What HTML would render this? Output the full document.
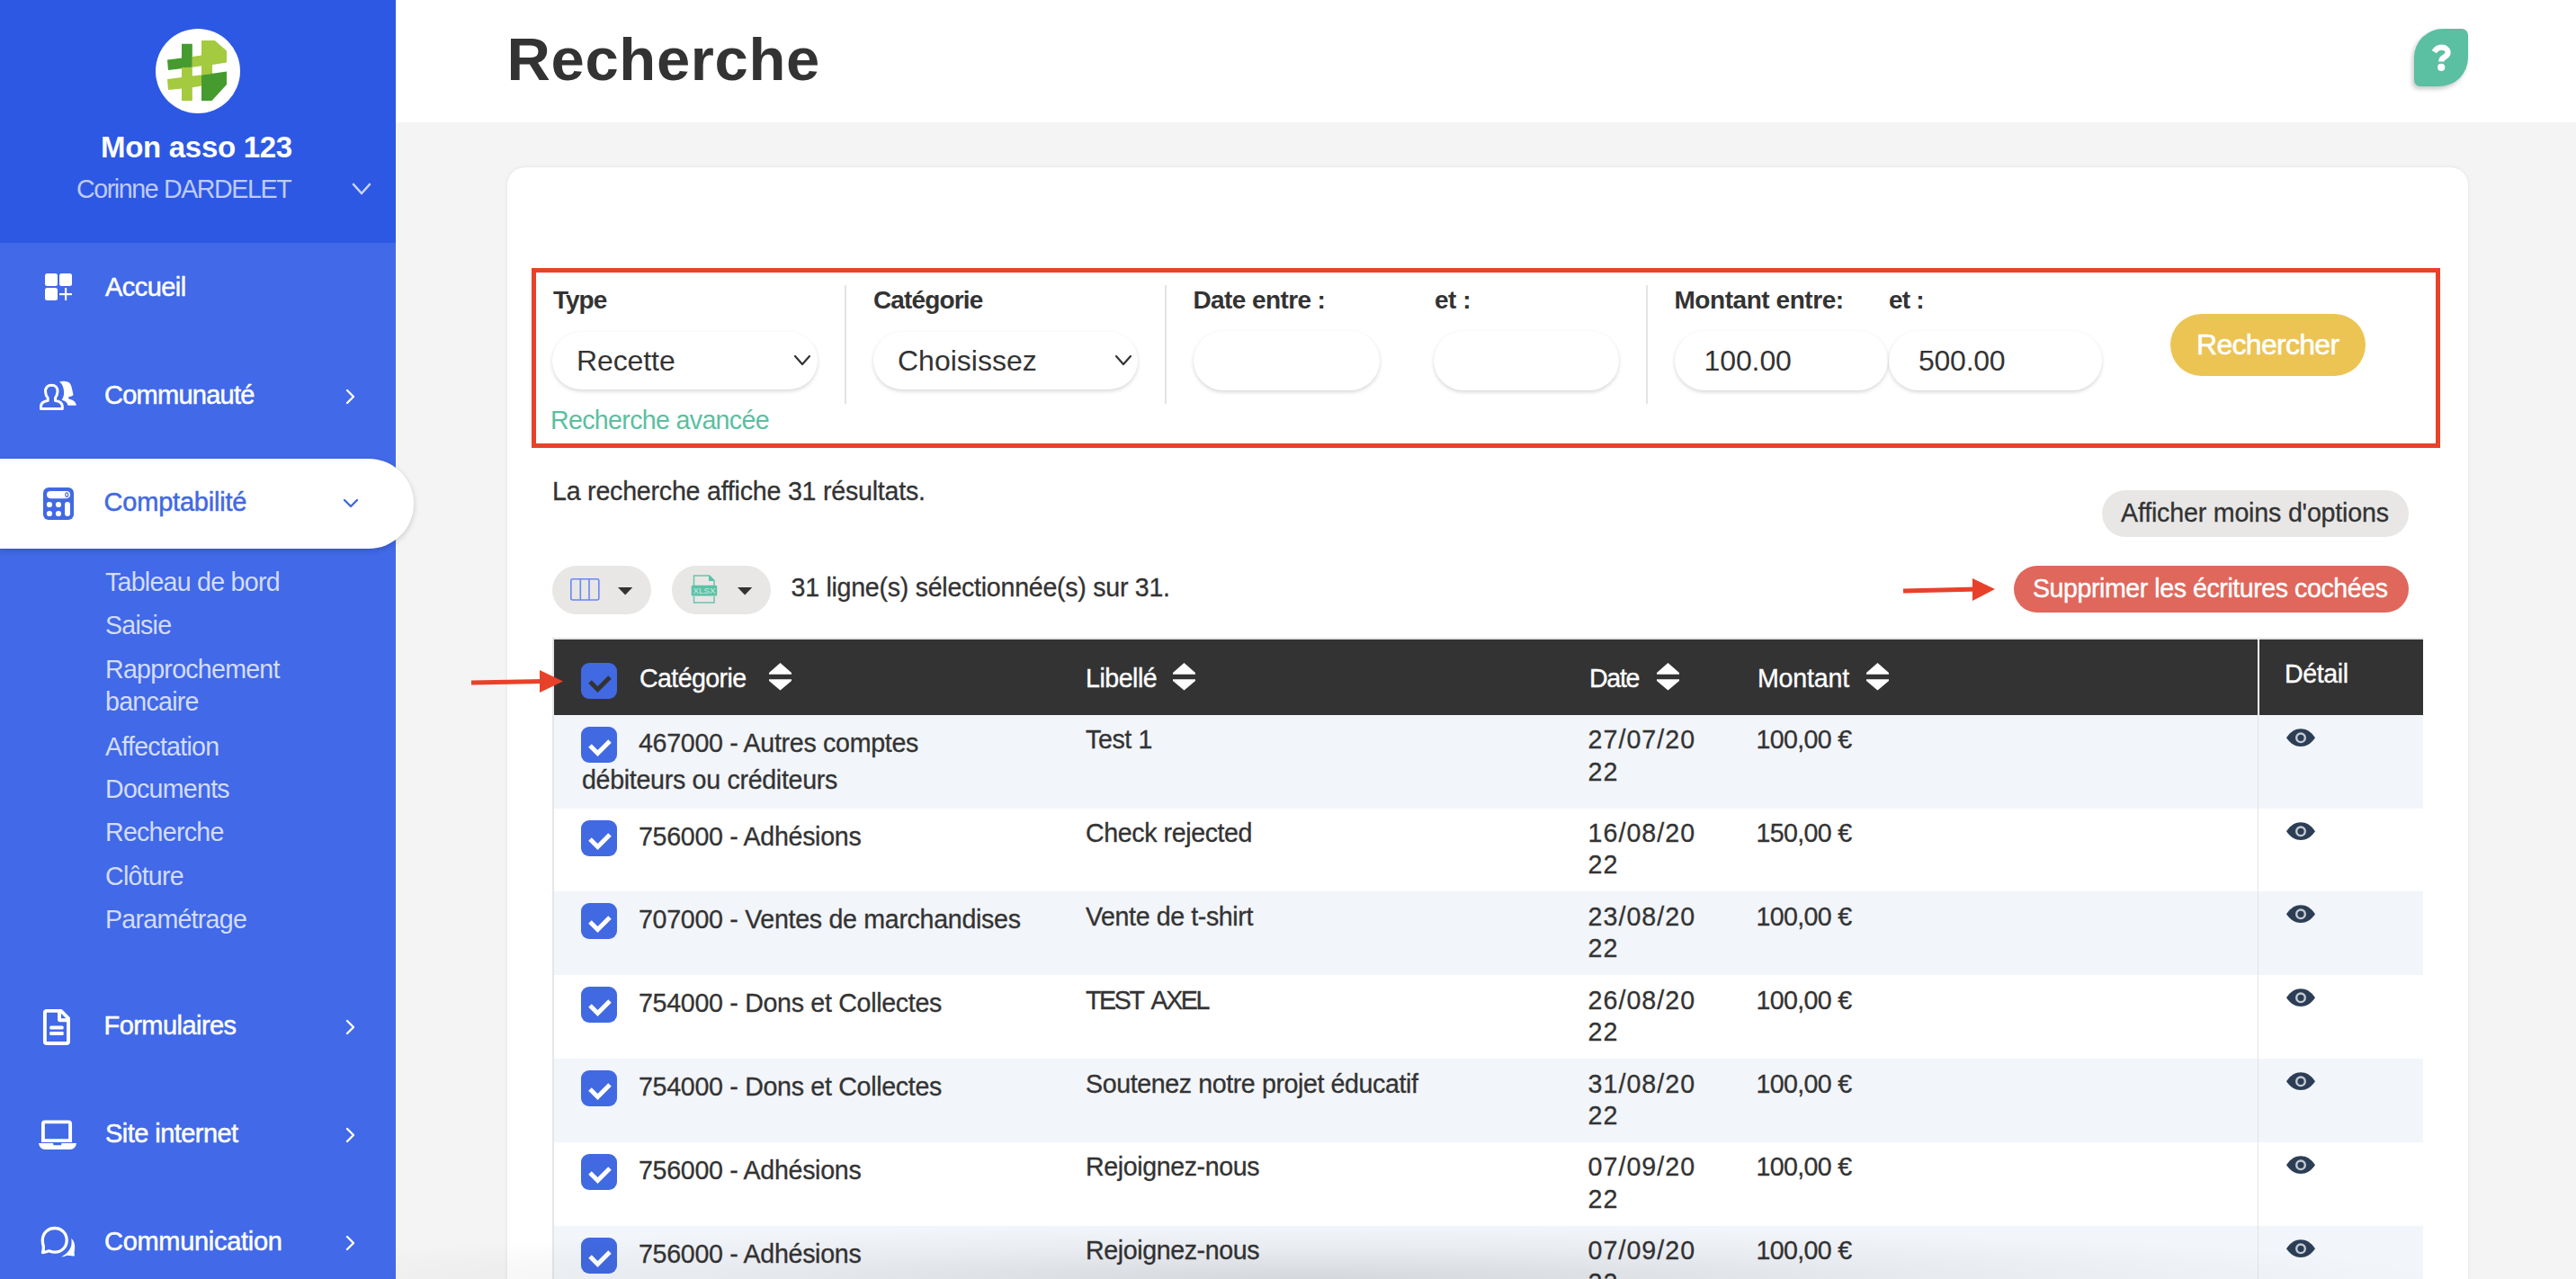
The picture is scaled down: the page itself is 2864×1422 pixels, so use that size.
<!DOCTYPE html>
<html><head><meta charset="utf-8"><title>Recherche</title><style>
*{margin:0;padding:0;box-sizing:border-box}
html,body{width:2864px;height:1422px;overflow:hidden;background:#F4F4F4;font-family:"Liberation Sans",sans-serif}
.t{position:absolute;line-height:1;white-space:nowrap;z-index:5}
#side-top{position:absolute;left:0;top:0;width:440px;height:270px;background:#2D58E4}
#side-nav{position:absolute;left:0;top:270px;width:440px;height:1152px;background:#4169E8}
#pill{position:absolute;left:0;top:510px;width:460px;height:100px;background:#fff;border-radius:0 50px 50px 0;box-shadow:0 2px 6px rgba(0,0,0,.18);z-index:2}
#hdr{position:absolute;left:440px;top:0;width:2424px;height:136px;background:#fff}
#help{position:absolute;left:2684px;top:32px;width:60px;height:64px;background:#5BBFA2;border-radius:32px 7px 32px 7px;box-shadow:-2px 3px 5px rgba(0,0,0,.22)}
#help svg{position:absolute;left:0;top:0}
#card{position:absolute;left:564px;top:186px;width:2180px;height:1400px;background:#fff;border-radius:20px;box-shadow:0 0 4px rgba(0,0,0,.08)}
#redbox{position:absolute;left:591px;top:298px;width:2122px;height:200px;border:5px solid #E8412A}
.inp{position:absolute;background:#fff;border-radius:40px;box-shadow:0 2px 4px rgba(0,0,0,.16)}
.btn{position:absolute;border-radius:40px}
#tblborder{position:absolute;left:614px;top:710px;width:2px;height:760px;background:#E6E6E6}
#thead{position:absolute;left:616px;top:710.5px;width:2078px;height:84.5px;background:#333}
#shade{position:absolute;left:440px;top:1362px;width:2424px;height:60px;background:radial-gradient(ellipse 52% 100% at 42% 100%,rgba(0,0,0,.12),rgba(0,0,0,.045) 55%,rgba(0,0,0,0) 100%);z-index:10}
</style></head>
<body>
<div id="side-top"></div><div id="side-nav"></div>
<svg style="position:absolute;left:170px;top:30px" width="100" height="100" viewBox="0 0 100 100">
<circle cx="50" cy="49" r="47" fill="#fff"/>
<polygon fill="#459B2E" points="32,18.8 43.8,18.8 43.8,44.8 17,48 16,36.5 32,34.4"/>
<polygon fill="#A4CA3F" points="54,15 68.8,15 82,26.5 82,39.5 66,42 66,52 54,53.5 54,43.3 43.8,44.8 43.8,33 54,31.6"/>
<polygon fill="#A4CA3F" points="32,45 43.8,44.8 43.8,54.5 54,53.3 54,65.5 43.8,67.3 43.8,82 32,82 32,68.6 17,70 16,58 32,56"/>
<polygon fill="#459B2E" points="54,53.5 82,49.5 82,64 65.5,82 54,82"/>
</svg>
<div class="t" style="left:112px;top:147.06px;font-size:33px;color:#fff;font-weight:700;letter-spacing:-0.3px;">Mon asso 123</div>
<div class="t" style="left:85px;top:196.48px;font-size:28.6px;color:#BFCBF7;font-weight:400;letter-spacing:-1.4000000000000001px;">Corinne DARDELET</div>
<svg style="position:absolute;left:390px;top:200px" width="24" height="20" viewBox="0 0 24 20"><polyline points="3,5 12,15 21,5" fill="none" stroke="#CBD5FA" stroke-width="2.6" stroke-linecap="round" stroke-linejoin="round"/></svg>
<div id="pill"></div>
<svg style="position:absolute;left:46px;top:300px" width="40" height="40" viewBox="0 0 40 40" fill="#fff">
<rect x="4" y="4" width="14" height="14" rx="2.5"/><rect x="20" y="4" width="14" height="14" rx="2.5"/>
<rect x="4" y="20" width="14" height="14" rx="2.5"/><rect x="26" y="20" width="2.2" height="14"/><rect x="20" y="26" width="14" height="2.2"/>
</svg>
<svg style="position:absolute;left:35px;top:415px" width="60" height="50" viewBox="0 0 60 50">
<path d="M31,9.5 C36,8 41,9 43,11.5 C45,15 45.5,20 46.5,24 C45.5,25.5 42.5,26 41,26.5 L41.5,28.5 C46,29.5 49.5,31.5 49.8,35.8 L40.5,35.8 C39.5,32 37,30.5 33.5,29.8 C35.5,27 36.5,24 36,20 C35.7,15 34,11.5 31,9.5 Z" fill="#fff"/>
<path d="M22.3,13.2 C26.5,13.2 29,16 29,20 C29,23.5 28,25.5 26.5,27.5 L26.5,30.5 C30.5,31 34.3,33 34.3,37 L34.3,39.5 L10.5,39.5 L10.5,37 C10.5,33 14,31 18.2,30.5 L18.2,27.5 C16.5,25.5 15.5,23.5 15.5,20 C15.5,16 18,13.2 22.3,13.2 Z" fill="none" stroke="#fff" stroke-width="3" stroke-linejoin="round"/>
</svg>
<svg style="position:absolute;left:35px;top:535px;z-index:3" width="60" height="50" viewBox="0 0 60 50">
<rect x="13" y="7" width="34" height="36" rx="6" fill="#4169E1"/>
<rect x="17" y="11" width="26" height="8.2" rx="4.1" fill="#fff"/><ellipse cx="39.3" cy="15.1" rx="1.5" ry="2.3" fill="none" stroke="#4169E1" stroke-width="1.1"/>
<circle cx="20" cy="26" r="3.1" fill="#fff"/><circle cx="30" cy="26" r="3.1" fill="#fff"/>
<circle cx="20" cy="36" r="3.1" fill="#fff"/><circle cx="30" cy="36" r="3.1" fill="#fff"/>
<rect x="37" y="22.9" width="6" height="16.1" rx="3" fill="#fff"/>
</svg>
<svg style="position:absolute;left:35px;top:1115px" width="60" height="55" viewBox="0 0 60 55">
<path d="M16.2,8.9 L32.8,8.9 L41,17.1 L41,43 Q41,45 39,45 L16.9,45 Q14.9,45 14.9,43 L14.9,10.9 Q14.9,8.9 16.9,8.9 Z" fill="none" stroke="#fff" stroke-width="3.9" stroke-linejoin="round"/>
<path d="M31,8.9 L31,18.5 Q31,19.2 31.7,19.2 L41,19.2" fill="none" stroke="#fff" stroke-width="3.9"/>
<rect x="20.2" y="25.4" width="15.5" height="4.2" rx="1.5" fill="#fff"/><rect x="20.2" y="32" width="15.5" height="4" rx="1" fill="#fff"/>
</svg>
<svg style="position:absolute;left:35px;top:1235px" width="60" height="55" viewBox="0 0 60 55">
<path d="M12.9,33.1 L12.9,14.5 Q12.9,12.4 15,12.4 L41,12.4 Q43.1,12.4 43.1,14.5 L43.1,33.1 Z" fill="none" stroke="#fff" stroke-width="3.9"/>
<path d="M8,36.1 L24,36.1 L24.5,38.3 L33,38.3 L33.5,36.1 L50,36.1 Q49,43 43,43 L15,43 Q9,43 8,36.1 Z" fill="#fff"/>
</svg>
<svg style="position:absolute;left:35px;top:1355px" width="60" height="55" viewBox="0 0 60 55">
<path d="M25.8,10.5 C33.6,10.5 39.2,16.5 39.2,24 C39.2,31.5 33.5,37.2 26,37.2 C23.5,37.2 21.5,36.6 19.5,35.8 C17,36.8 14.5,37.5 12.5,37.5 C13.2,35.5 13.5,33.3 13.3,30.5 C12.6,28.6 12.3,26.5 12.3,24 C12.3,16.5 18,10.5 25.8,10.5 Z" fill="none" stroke="#fff" stroke-width="3.3" stroke-linejoin="round"/>
<path d="M44.3,22 C47.5,24.5 48.8,29.5 48,34 C47.7,36.5 47.3,38.5 48,41.3 C45,41.8 42,41 40,40.8 C37.5,41.5 35.5,42.6 33,42.6 C40,38.5 43.8,34 44.5,28 C44.7,26 44.6,24 44.3,22 Z" fill="#fff"/>
</svg>
<div class="t" style="left:117px;top:305.45px;font-size:29px;color:#fff;font-weight:400;letter-spacing:-0.55px;-webkit-text-stroke:0.5px #fff">Accueil</div>
<div class="t" style="left:116px;top:425.45px;font-size:29px;color:#fff;font-weight:400;letter-spacing:-0.75px;-webkit-text-stroke:0.5px #fff">Communauté</div>
<div class="t" style="left:115.5px;top:544.45px;font-size:29px;color:#4169E1;font-weight:400;letter-spacing:-0.2px;-webkit-text-stroke:0.5px #4169E1">Comptabilité</div>
<div class="t" style="left:115.5px;top:1126.45px;font-size:29px;color:#fff;font-weight:400;letter-spacing:-0.55px;-webkit-text-stroke:0.5px #fff">Formulaires</div>
<div class="t" style="left:117px;top:1246.45px;font-size:29px;color:#fff;font-weight:400;letter-spacing:-0.55px;-webkit-text-stroke:0.5px #fff">Site internet</div>
<div class="t" style="left:116px;top:1366.45px;font-size:29px;color:#fff;font-weight:400;letter-spacing:-0.3px;-webkit-text-stroke:0.5px #fff">Communication</div>
<svg style="position:absolute;left:380px;top:429px" width="20" height="24" viewBox="0 0 20 24"><polyline points="6,5 13,12 6,19" fill="none" stroke="#fff" stroke-width="2.4" stroke-linecap="round" stroke-linejoin="round"/></svg>
<svg style="position:absolute;left:380px;top:1130px" width="20" height="24" viewBox="0 0 20 24"><polyline points="6,5 13,12 6,19" fill="none" stroke="#fff" stroke-width="2.4" stroke-linecap="round" stroke-linejoin="round"/></svg>
<svg style="position:absolute;left:380px;top:1250px" width="20" height="24" viewBox="0 0 20 24"><polyline points="6,5 13,12 6,19" fill="none" stroke="#fff" stroke-width="2.4" stroke-linecap="round" stroke-linejoin="round"/></svg>
<svg style="position:absolute;left:380px;top:1370px" width="20" height="24" viewBox="0 0 20 24"><polyline points="6,5 13,12 6,19" fill="none" stroke="#fff" stroke-width="2.4" stroke-linecap="round" stroke-linejoin="round"/></svg>
<svg style="position:absolute;left:378px;top:549px;z-index:3" width="24" height="22" viewBox="0 0 24 22"><polyline points="5,7 12,14 19,7" fill="none" stroke="#4169E1" stroke-width="2.4" stroke-linecap="round" stroke-linejoin="round"/></svg>
<div class="t" style="left:117px;top:633.48px;font-size:28.6px;color:#D3DCFB;font-weight:400;letter-spacing:-0.75px;">Tableau de bord</div>
<div class="t" style="left:117px;top:681.48px;font-size:28.6px;color:#D3DCFB;font-weight:400;letter-spacing:-0.75px;">Saisie</div>
<div class="t" style="left:117px;top:730.48px;font-size:28.6px;color:#D3DCFB;font-weight:400;letter-spacing:-0.75px;">Rapprochement</div>
<div class="t" style="left:117px;top:766.48px;font-size:28.6px;color:#D3DCFB;font-weight:400;letter-spacing:-0.75px;">bancaire</div>
<div class="t" style="left:117px;top:816.48px;font-size:28.6px;color:#D3DCFB;font-weight:400;letter-spacing:-0.75px;">Affectation</div>
<div class="t" style="left:117px;top:863.48px;font-size:28.6px;color:#D3DCFB;font-weight:400;letter-spacing:-0.75px;">Documents</div>
<div class="t" style="left:117px;top:911.48px;font-size:28.6px;color:#D3DCFB;font-weight:400;letter-spacing:-0.75px;">Recherche</div>
<div class="t" style="left:117px;top:960.48px;font-size:28.6px;color:#D3DCFB;font-weight:400;letter-spacing:-0.75px;">Clôture</div>
<div class="t" style="left:117px;top:1008.48px;font-size:28.6px;color:#D3DCFB;font-weight:400;letter-spacing:-0.75px;">Paramétrage</div>
<div id="hdr"></div>
<div class="t" style="left:563.5px;top:32.27px;font-size:67px;color:#333;font-weight:700;letter-spacing:0.65px;">Recherche</div>
<div id="help"><svg width="60" height="64" viewBox="0 0 60 64"><path d="M22.3,25.6 C24.5,22.2 27,20.6 30.5,20.6 C35,20.6 37.6,23.2 37.6,26.3 C37.6,29.5 35.3,30.6 33,32 C31.2,33.1 30.3,34.2 30.3,36.6" fill="none" stroke="#fff" stroke-width="6.2" stroke-linecap="butt"/><circle cx="30.2" cy="42.9" r="4.1" fill="#fff"/></svg></div>
<div id="card"></div>
<div id="redbox"></div>
<div class="t" style="left:615px;top:319.99px;font-size:28px;color:#333;font-weight:700;letter-spacing:-1.0px;">Type</div>
<div class="t" style="left:971px;top:319.99px;font-size:28px;color:#333;font-weight:700;letter-spacing:-0.85px;">Catégorie</div>
<div class="t" style="left:1326.5px;top:319.79px;font-size:28px;color:#333;font-weight:700;letter-spacing:-0.6px;">Date entre :</div>
<div class="t" style="left:1595px;top:319.79px;font-size:28px;color:#333;font-weight:700;letter-spacing:-0.5px;">et :</div>
<div class="t" style="left:1861.5px;top:319.79px;font-size:28px;color:#333;font-weight:700;letter-spacing:-0.45px;">Montant entre:</div>
<div class="t" style="left:2100px;top:319.79px;font-size:28px;color:#333;font-weight:700;letter-spacing:-0.8px;">et :</div>
<div style="position:absolute;left:939px;top:317px;width:2px;height:132px;background:#E3E3E3"></div>
<div style="position:absolute;left:1295px;top:317px;width:2px;height:132px;background:#E3E3E3"></div>
<div style="position:absolute;left:1830px;top:317px;width:2px;height:132px;background:#E3E3E3"></div>
<div class="inp" style="left:614px;top:369px;width:295px;height:64px"></div>
<div class="inp" style="left:971px;top:369px;width:294px;height:64px"></div>
<div class="inp" style="left:1327px;top:368px;width:207px;height:66px"></div>
<div class="inp" style="left:1594px;top:368px;width:206px;height:66px"></div>
<div class="inp" style="left:1862px;top:368px;width:237px;height:66px"></div>
<div class="inp" style="left:2100px;top:368px;width:237px;height:66px"></div>
<div class="t" style="left:641px;top:384.91px;font-size:32px;color:#333;font-weight:400;letter-spacing:-0.1px;">Recette</div>
<div class="t" style="left:998px;top:384.91px;font-size:32px;color:#333;font-weight:400;letter-spacing:0.0px;">Choisissez</div>
<div class="t" style="left:1894.5px;top:384.51px;font-size:32px;color:#333;font-weight:400;letter-spacing:-0.1px;">100.00</div>
<div class="t" style="left:2133px;top:384.51px;font-size:32px;color:#333;font-weight:400;letter-spacing:-0.25px;">500.00</div>
<svg style="position:absolute;left:881px;top:392px" width="22" height="18" viewBox="0 0 22 18"><polyline points="3,4 11,13 19,4" fill="none" stroke="#333" stroke-width="2.2" stroke-linecap="round" stroke-linejoin="round"/></svg>
<svg style="position:absolute;left:1238px;top:392px" width="22" height="18" viewBox="0 0 22 18"><polyline points="3,4 11,13 19,4" fill="none" stroke="#333" stroke-width="2.2" stroke-linecap="round" stroke-linejoin="round"/></svg>
<div class="t" style="left:612px;top:453.48px;font-size:28.6px;color:#5BBFA0;font-weight:400;letter-spacing:-0.6699999999999999px;">Recherche avancée</div>
<div class="btn" style="left:2413px;top:349px;width:217px;height:69px;background:#ECC453"></div>
<div class="t" style="left:2442px;top:366.91px;font-size:32px;color:#fff;font-weight:400;letter-spacing:-0.7px;-webkit-text-stroke:0.55px #fff">Rechercher</div>
<div class="t" style="left:614px;top:532.48px;font-size:28.6px;color:#333;font-weight:400;letter-spacing:-0.21999999999999997px;;-webkit-text-stroke:0.3px #333">La recherche affiche 31 résultats.</div>
<div class="btn" style="left:2337px;top:545px;width:341px;height:52px;background:#E8E7E6"></div>
<div class="t" style="left:2358px;top:556.48px;font-size:28.6px;color:#333;font-weight:400;letter-spacing:-0.18px;;-webkit-text-stroke:0.3px #333">Afficher moins d'options</div>
<div class="btn" style="left:2239px;top:629px;width:439px;height:52px;background:#E0675B"></div>
<div class="t" style="left:2260px;top:640.48px;font-size:28.6px;color:#fff;font-weight:400;letter-spacing:-0.44999999999999996px;-webkit-text-stroke:0.4px #fff">Supprimer les écritures cochées</div>
<svg style="position:absolute;left:2110px;top:638px" width="115" height="36" viewBox="0 0 115 36"><line x1="6" y1="19" x2="90" y2="17" stroke="#E8412A" stroke-width="5"/><polygon points="83,5 108,17 83,30" fill="#E8412A"/></svg>
<div class="btn" style="left:614px;top:629px;width:110px;height:54px;background:#E8E7E6"></div>
<div class="btn" style="left:747px;top:629px;width:110px;height:54px;background:#E8E7E6"></div>
<svg style="position:absolute;left:630px;top:640px" width="40" height="30" viewBox="0 0 40 30"><rect x="4.8" y="3.8" width="31" height="23.2" rx="2" fill="none" stroke="#6A88F0" stroke-width="1.6"/><line x1="15.3" y1="4" x2="15.3" y2="27" stroke="#6A88F0" stroke-width="1.6"/><line x1="25" y1="4" x2="25" y2="27" stroke="#6A88F0" stroke-width="1.6"/></svg>
<svg style="position:absolute;left:766px;top:636px" width="36" height="38" viewBox="0 0 36 38"><path d="M5.5,15 L5.5,4 L22.5,4 L28,9.5 L28,15" fill="none" stroke="#66C6AC" stroke-width="1.5"/><path d="M22,3 L29,10 L22,10 Z" fill="#5BC2A6"/><path d="M5.5,27 L5.5,34 L28,34 L28,27" fill="none" stroke="#66C6AC" stroke-width="1.5"/><rect x="2.7" y="14.8" width="28.5" height="11.6" rx="1.5" fill="#5BC2A6"/><text x="17" y="23.8" font-family="Liberation Sans" font-size="9" font-weight="400" fill="#CDEBE1" text-anchor="middle" textLength="25" lengthAdjust="spacingAndGlyphs">XLSX</text></svg>
<svg style="position:absolute;left:686.7px;top:652.8px" width="17" height="9" viewBox="0 0 17 9"><polygon points="0,0 16.3,0 8.15,8.6" fill="#333"/></svg>
<svg style="position:absolute;left:819.7px;top:652.8px" width="17" height="9" viewBox="0 0 17 9"><polygon points="0,0 16.3,0 8.15,8.6" fill="#333"/></svg>
<div class="t" style="left:879.5px;top:639.48px;font-size:28.6px;color:#333;font-weight:400;letter-spacing:-0.27px;;-webkit-text-stroke:0.3px #333">31 ligne(s) sélectionnée(s) sur 31.</div>
<svg style="position:absolute;left:518px;top:740px;z-index:6" width="112" height="36" viewBox="0 0 112 36"><line x1="6" y1="19" x2="86" y2="17.5" stroke="#E8412A" stroke-width="5"/><polygon points="82,5 108,17.5 82,30" fill="#E8412A"/></svg>
<div id="tblborder"></div>
<div style="position:absolute;left:614px;top:709px;width:2080px;height:1.5px;background:#E6E6E6"></div>
<div id="thead"></div>
<div style="position:absolute;left:2509.5px;top:710px;width:2px;height:85px;background:#fff"></div>
<div style="position:absolute;left:2510px;top:795px;width:1px;height:640px;background:#E2E2E2;z-index:3"></div>
<svg style="position:absolute;left:646px;top:736.5px;z-index:4" width="40" height="40" viewBox="0 0 40 40"><rect x="0" y="0" width="40" height="40" rx="9" fill="#4169E1"/><polyline points="10,21 18.5,29.5 32,16" fill="none" stroke="#333" stroke-width="5" stroke-linecap="butt" stroke-linejoin="miter"/></svg>
<div class="t" style="left:711px;top:740.18px;font-size:28.6px;color:#fff;font-weight:400;letter-spacing:-0.6px;z-index:4;-webkit-text-stroke:0.35px #fff">Catégorie</div>
<svg style="position:absolute;left:853.8px;top:736.8px;z-index:4" width="27" height="31" viewBox="0 0 27 31"><polygon points="13.5,0 26,11 26,12.8 1,12.8 1,11" fill="#fff"/><polygon points="1,18.2 26,18.2 26,20 13.5,30.5 1,20" fill="#fff"/></svg>
<div class="t" style="left:1207px;top:740.18px;font-size:28.6px;color:#fff;font-weight:400;letter-spacing:-0.5px;z-index:4;-webkit-text-stroke:0.35px #fff">Libellé</div>
<svg style="position:absolute;left:1303px;top:736.8px;z-index:4" width="27" height="31" viewBox="0 0 27 31"><polygon points="13.5,0 26,11 26,12.8 1,12.8 1,11" fill="#fff"/><polygon points="1,18.2 26,18.2 26,20 13.5,30.5 1,20" fill="#fff"/></svg>
<div class="t" style="left:1767px;top:740.18px;font-size:28.6px;color:#fff;font-weight:400;letter-spacing:-1.3px;z-index:4;-webkit-text-stroke:0.35px #fff">Date</div>
<svg style="position:absolute;left:1840.5px;top:736.8px;z-index:4" width="27" height="31" viewBox="0 0 27 31"><polygon points="13.5,0 26,11 26,12.8 1,12.8 1,11" fill="#fff"/><polygon points="1,18.2 26,18.2 26,20 13.5,30.5 1,20" fill="#fff"/></svg>
<div class="t" style="left:1954px;top:740.18px;font-size:28.6px;color:#fff;font-weight:400;letter-spacing:-0.19999999999999998px;z-index:4;-webkit-text-stroke:0.35px #fff">Montant</div>
<svg style="position:absolute;left:2073.5px;top:736.8px;z-index:4" width="27" height="31" viewBox="0 0 27 31"><polygon points="13.5,0 26,11 26,12.8 1,12.8 1,11" fill="#fff"/><polygon points="1,18.2 26,18.2 26,20 13.5,30.5 1,20" fill="#fff"/></svg>
<div class="t" style="left:2540px;top:734.98px;font-size:28.6px;color:#fff;font-weight:400;letter-spacing:-0.4px;z-index:4;-webkit-text-stroke:0.35px #fff">Détail</div>
<div style="position:absolute;left:616px;top:795px;width:2078px;height:103.60000000000002px;background:#F2F5FA"></div>
<svg style="position:absolute;left:646px;top:808px;z-index:4" width="40" height="40" viewBox="0 0 40 40"><rect x="0" y="0" width="40" height="40" rx="9" fill="#4169E1"/><polyline points="10,21 18.5,29.5 32,16" fill="none" stroke="#fff" stroke-width="5" stroke-linecap="butt" stroke-linejoin="miter"/></svg>
<div class="t" style="left:710px;top:811.98px;font-size:28.6px;color:#333;font-weight:400;letter-spacing:-0.3px;z-index:4;-webkit-text-stroke:0.3px #333">467000 - Autres comptes</div>
<div class="t" style="left:647px;top:852.98px;font-size:28.6px;color:#333;font-weight:400;letter-spacing:-0.3px;z-index:4;-webkit-text-stroke:0.3px #333">débiteurs ou créditeurs</div>
<div class="t" style="left:1207px;top:808.48px;font-size:28.6px;color:#333;font-weight:400;letter-spacing:-0.4px;z-index:4;-webkit-text-stroke:0.3px #333">Test 1</div>
<div class="t" style="left:1765.5px;top:808.48px;font-size:28.6px;color:#333;font-weight:400;letter-spacing:1.05px;z-index:4;-webkit-text-stroke:0.3px #333">27/07/20</div>
<div class="t" style="left:1765.5px;top:843.88px;font-size:28.6px;color:#333;font-weight:400;letter-spacing:1.05px;z-index:4;-webkit-text-stroke:0.3px #333">22</div>
<div class="t" style="left:1952.5px;top:808.48px;font-size:28.6px;color:#333;font-weight:400;letter-spacing:-0.6499999999999999px;z-index:4;-webkit-text-stroke:0.3px #333">100,00 €</div>
<svg style="position:absolute;left:2540px;top:808px;z-index:4" width="36" height="24" viewBox="0 0 36 24"><path d="M2,12.3 C7,5 12,2.3 18,2.3 C24,2.3 29,5 34,12.3 C29,19.5 24,22 18,22 C12,22 7,19.5 2,12.3 Z" fill="#2C3E55"/><circle cx="18" cy="12.3" r="4.8" fill="none" stroke="#C5CAD3" stroke-width="2.4"/><circle cx="18" cy="12.3" r="2.1" fill="#2C3E55"/></svg>
<div style="position:absolute;left:616px;top:898.6px;width:2078px;height:92.81999999999994px;background:#fff"></div>
<svg style="position:absolute;left:646px;top:911.6px;z-index:4" width="40" height="40" viewBox="0 0 40 40"><rect x="0" y="0" width="40" height="40" rx="9" fill="#4169E1"/><polyline points="10,21 18.5,29.5 32,16" fill="none" stroke="#fff" stroke-width="5" stroke-linecap="butt" stroke-linejoin="miter"/></svg>
<div class="t" style="left:710px;top:915.58px;font-size:28.6px;color:#333;font-weight:400;letter-spacing:-0.3px;z-index:4;-webkit-text-stroke:0.3px #333">756000 - Adhésions</div>
<div class="t" style="left:1207px;top:912.08px;font-size:28.6px;color:#333;font-weight:400;letter-spacing:-0.4px;z-index:4;-webkit-text-stroke:0.3px #333">Check rejected</div>
<div class="t" style="left:1765.5px;top:912.08px;font-size:28.6px;color:#333;font-weight:400;letter-spacing:1.05px;z-index:4;-webkit-text-stroke:0.3px #333">16/08/20</div>
<div class="t" style="left:1765.5px;top:947.48px;font-size:28.6px;color:#333;font-weight:400;letter-spacing:1.05px;z-index:4;-webkit-text-stroke:0.3px #333">22</div>
<div class="t" style="left:1952.5px;top:912.08px;font-size:28.6px;color:#333;font-weight:400;letter-spacing:-0.6499999999999999px;z-index:4;-webkit-text-stroke:0.3px #333">150,00 €</div>
<svg style="position:absolute;left:2540px;top:911.6px;z-index:4" width="36" height="24" viewBox="0 0 36 24"><path d="M2,12.3 C7,5 12,2.3 18,2.3 C24,2.3 29,5 34,12.3 C29,19.5 24,22 18,22 C12,22 7,19.5 2,12.3 Z" fill="#2C3E55"/><circle cx="18" cy="12.3" r="4.8" fill="none" stroke="#C5CAD3" stroke-width="2.4"/><circle cx="18" cy="12.3" r="2.1" fill="#2C3E55"/></svg>
<div style="position:absolute;left:616px;top:991.42px;width:2078px;height:92.82000000000005px;background:#F2F5FA"></div>
<svg style="position:absolute;left:646px;top:1004.42px;z-index:4" width="40" height="40" viewBox="0 0 40 40"><rect x="0" y="0" width="40" height="40" rx="9" fill="#4169E1"/><polyline points="10,21 18.5,29.5 32,16" fill="none" stroke="#fff" stroke-width="5" stroke-linecap="butt" stroke-linejoin="miter"/></svg>
<div class="t" style="left:710px;top:1008.40px;font-size:28.6px;color:#333;font-weight:400;letter-spacing:-0.3px;z-index:4;-webkit-text-stroke:0.3px #333">707000 - Ventes de marchandises</div>
<div class="t" style="left:1207px;top:1004.90px;font-size:28.6px;color:#333;font-weight:400;letter-spacing:-0.4px;z-index:4;-webkit-text-stroke:0.3px #333">Vente de t-shirt</div>
<div class="t" style="left:1765.5px;top:1004.90px;font-size:28.6px;color:#333;font-weight:400;letter-spacing:1.05px;z-index:4;-webkit-text-stroke:0.3px #333">23/08/20</div>
<div class="t" style="left:1765.5px;top:1040.30px;font-size:28.6px;color:#333;font-weight:400;letter-spacing:1.05px;z-index:4;-webkit-text-stroke:0.3px #333">22</div>
<div class="t" style="left:1952.5px;top:1004.90px;font-size:28.6px;color:#333;font-weight:400;letter-spacing:-0.6499999999999999px;z-index:4;-webkit-text-stroke:0.3px #333">100,00 €</div>
<svg style="position:absolute;left:2540px;top:1004.42px;z-index:4" width="36" height="24" viewBox="0 0 36 24"><path d="M2,12.3 C7,5 12,2.3 18,2.3 C24,2.3 29,5 34,12.3 C29,19.5 24,22 18,22 C12,22 7,19.5 2,12.3 Z" fill="#2C3E55"/><circle cx="18" cy="12.3" r="4.8" fill="none" stroke="#C5CAD3" stroke-width="2.4"/><circle cx="18" cy="12.3" r="2.1" fill="#2C3E55"/></svg>
<div style="position:absolute;left:616px;top:1084.24px;width:2078px;height:92.81999999999994px;background:#fff"></div>
<svg style="position:absolute;left:646px;top:1097.24px;z-index:4" width="40" height="40" viewBox="0 0 40 40"><rect x="0" y="0" width="40" height="40" rx="9" fill="#4169E1"/><polyline points="10,21 18.5,29.5 32,16" fill="none" stroke="#fff" stroke-width="5" stroke-linecap="butt" stroke-linejoin="miter"/></svg>
<div class="t" style="left:710px;top:1101.22px;font-size:28.6px;color:#333;font-weight:400;letter-spacing:-0.3px;z-index:4;-webkit-text-stroke:0.3px #333">754000 - Dons et Collectes</div>
<div class="t" style="left:1207px;top:1097.72px;font-size:28.6px;color:#333;font-weight:400;letter-spacing:-2.4px;z-index:4;word-spacing:5.6px;-webkit-text-stroke:0.3px #333">TEST AXEL</div>
<div class="t" style="left:1765.5px;top:1097.72px;font-size:28.6px;color:#333;font-weight:400;letter-spacing:1.05px;z-index:4;-webkit-text-stroke:0.3px #333">26/08/20</div>
<div class="t" style="left:1765.5px;top:1133.12px;font-size:28.6px;color:#333;font-weight:400;letter-spacing:1.05px;z-index:4;-webkit-text-stroke:0.3px #333">22</div>
<div class="t" style="left:1952.5px;top:1097.72px;font-size:28.6px;color:#333;font-weight:400;letter-spacing:-0.6499999999999999px;z-index:4;-webkit-text-stroke:0.3px #333">100,00 €</div>
<svg style="position:absolute;left:2540px;top:1097.24px;z-index:4" width="36" height="24" viewBox="0 0 36 24"><path d="M2,12.3 C7,5 12,2.3 18,2.3 C24,2.3 29,5 34,12.3 C29,19.5 24,22 18,22 C12,22 7,19.5 2,12.3 Z" fill="#2C3E55"/><circle cx="18" cy="12.3" r="4.8" fill="none" stroke="#C5CAD3" stroke-width="2.4"/><circle cx="18" cy="12.3" r="2.1" fill="#2C3E55"/></svg>
<div style="position:absolute;left:616px;top:1177.06px;width:2078px;height:92.82000000000016px;background:#F2F5FA"></div>
<svg style="position:absolute;left:646px;top:1190.06px;z-index:4" width="40" height="40" viewBox="0 0 40 40"><rect x="0" y="0" width="40" height="40" rx="9" fill="#4169E1"/><polyline points="10,21 18.5,29.5 32,16" fill="none" stroke="#fff" stroke-width="5" stroke-linecap="butt" stroke-linejoin="miter"/></svg>
<div class="t" style="left:710px;top:1194.04px;font-size:28.6px;color:#333;font-weight:400;letter-spacing:-0.3px;z-index:4;-webkit-text-stroke:0.3px #333">754000 - Dons et Collectes</div>
<div class="t" style="left:1207px;top:1190.54px;font-size:28.6px;color:#333;font-weight:400;letter-spacing:-0.4px;z-index:4;-webkit-text-stroke:0.3px #333">Soutenez notre projet éducatif</div>
<div class="t" style="left:1765.5px;top:1190.54px;font-size:28.6px;color:#333;font-weight:400;letter-spacing:1.05px;z-index:4;-webkit-text-stroke:0.3px #333">31/08/20</div>
<div class="t" style="left:1765.5px;top:1225.94px;font-size:28.6px;color:#333;font-weight:400;letter-spacing:1.05px;z-index:4;-webkit-text-stroke:0.3px #333">22</div>
<div class="t" style="left:1952.5px;top:1190.54px;font-size:28.6px;color:#333;font-weight:400;letter-spacing:-0.6499999999999999px;z-index:4;-webkit-text-stroke:0.3px #333">100,00 €</div>
<svg style="position:absolute;left:2540px;top:1190.06px;z-index:4" width="36" height="24" viewBox="0 0 36 24"><path d="M2,12.3 C7,5 12,2.3 18,2.3 C24,2.3 29,5 34,12.3 C29,19.5 24,22 18,22 C12,22 7,19.5 2,12.3 Z" fill="#2C3E55"/><circle cx="18" cy="12.3" r="4.8" fill="none" stroke="#C5CAD3" stroke-width="2.4"/><circle cx="18" cy="12.3" r="2.1" fill="#2C3E55"/></svg>
<div style="position:absolute;left:616px;top:1269.88px;width:2078px;height:92.81999999999994px;background:#fff"></div>
<svg style="position:absolute;left:646px;top:1282.88px;z-index:4" width="40" height="40" viewBox="0 0 40 40"><rect x="0" y="0" width="40" height="40" rx="9" fill="#4169E1"/><polyline points="10,21 18.5,29.5 32,16" fill="none" stroke="#fff" stroke-width="5" stroke-linecap="butt" stroke-linejoin="miter"/></svg>
<div class="t" style="left:710px;top:1286.86px;font-size:28.6px;color:#333;font-weight:400;letter-spacing:-0.3px;z-index:4;-webkit-text-stroke:0.3px #333">756000 - Adhésions</div>
<div class="t" style="left:1207px;top:1283.36px;font-size:28.6px;color:#333;font-weight:400;letter-spacing:-0.4px;z-index:4;-webkit-text-stroke:0.3px #333">Rejoignez-nous</div>
<div class="t" style="left:1765.5px;top:1283.36px;font-size:28.6px;color:#333;font-weight:400;letter-spacing:1.05px;z-index:4;-webkit-text-stroke:0.3px #333">07/09/20</div>
<div class="t" style="left:1765.5px;top:1318.76px;font-size:28.6px;color:#333;font-weight:400;letter-spacing:1.05px;z-index:4;-webkit-text-stroke:0.3px #333">22</div>
<div class="t" style="left:1952.5px;top:1283.36px;font-size:28.6px;color:#333;font-weight:400;letter-spacing:-0.6499999999999999px;z-index:4;-webkit-text-stroke:0.3px #333">100,00 €</div>
<svg style="position:absolute;left:2540px;top:1282.88px;z-index:4" width="36" height="24" viewBox="0 0 36 24"><path d="M2,12.3 C7,5 12,2.3 18,2.3 C24,2.3 29,5 34,12.3 C29,19.5 24,22 18,22 C12,22 7,19.5 2,12.3 Z" fill="#2C3E55"/><circle cx="18" cy="12.3" r="4.8" fill="none" stroke="#C5CAD3" stroke-width="2.4"/><circle cx="18" cy="12.3" r="2.1" fill="#2C3E55"/></svg>
<div style="position:absolute;left:616px;top:1362.7px;width:2078px;height:97.29999999999995px;background:#F2F5FA"></div>
<svg style="position:absolute;left:646px;top:1375.7px;z-index:4" width="40" height="40" viewBox="0 0 40 40"><rect x="0" y="0" width="40" height="40" rx="9" fill="#4169E1"/><polyline points="10,21 18.5,29.5 32,16" fill="none" stroke="#fff" stroke-width="5" stroke-linecap="butt" stroke-linejoin="miter"/></svg>
<div class="t" style="left:710px;top:1379.68px;font-size:28.6px;color:#333;font-weight:400;letter-spacing:-0.3px;z-index:4;-webkit-text-stroke:0.3px #333">756000 - Adhésions</div>
<div class="t" style="left:1207px;top:1376.18px;font-size:28.6px;color:#333;font-weight:400;letter-spacing:-0.4px;z-index:4;-webkit-text-stroke:0.3px #333">Rejoignez-nous</div>
<div class="t" style="left:1765.5px;top:1376.18px;font-size:28.6px;color:#333;font-weight:400;letter-spacing:1.05px;z-index:4;-webkit-text-stroke:0.3px #333">07/09/20</div>
<div class="t" style="left:1765.5px;top:1411.58px;font-size:28.6px;color:#333;font-weight:400;letter-spacing:1.05px;z-index:4;-webkit-text-stroke:0.3px #333">22</div>
<div class="t" style="left:1952.5px;top:1376.18px;font-size:28.6px;color:#333;font-weight:400;letter-spacing:-0.6499999999999999px;z-index:4;-webkit-text-stroke:0.3px #333">100,00 €</div>
<svg style="position:absolute;left:2540px;top:1375.7px;z-index:4" width="36" height="24" viewBox="0 0 36 24"><path d="M2,12.3 C7,5 12,2.3 18,2.3 C24,2.3 29,5 34,12.3 C29,19.5 24,22 18,22 C12,22 7,19.5 2,12.3 Z" fill="#2C3E55"/><circle cx="18" cy="12.3" r="4.8" fill="none" stroke="#C5CAD3" stroke-width="2.4"/><circle cx="18" cy="12.3" r="2.1" fill="#2C3E55"/></svg>
<div id="shade"></div>
</body></html>
